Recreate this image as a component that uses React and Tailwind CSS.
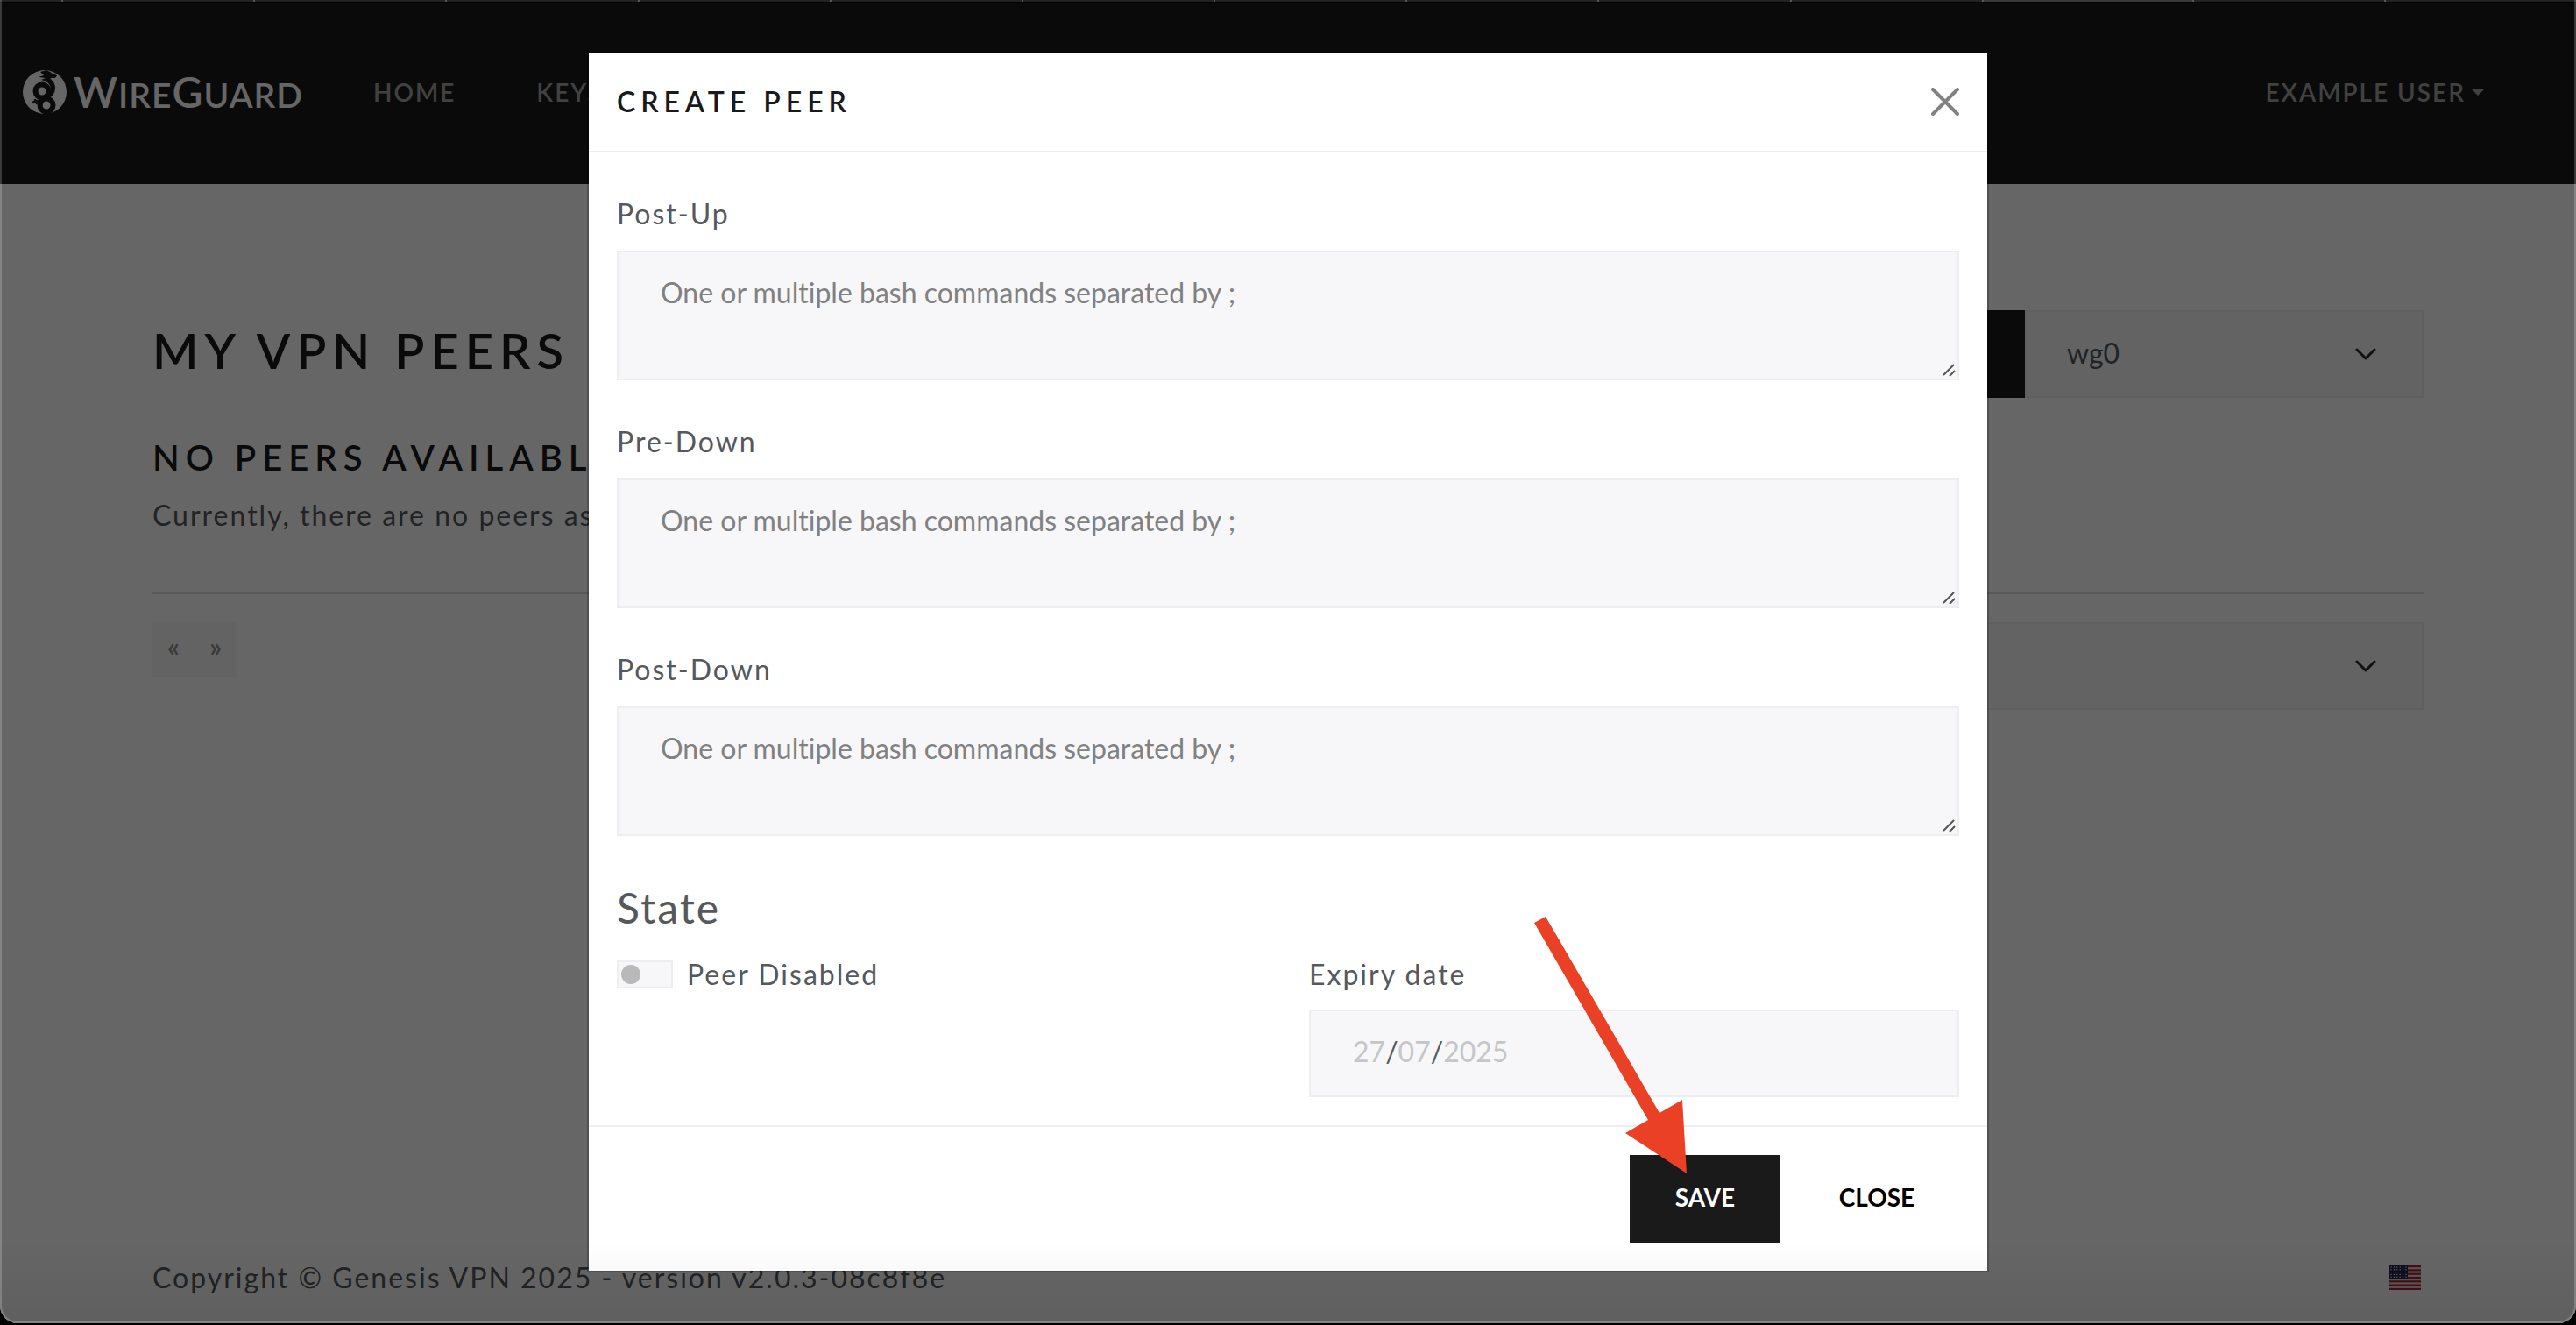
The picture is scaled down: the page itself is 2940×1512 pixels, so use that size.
import { useId } from "react";

function BrowserEdge() {
  return (
    <div className="shrink-0 border-b border-black" aria-hidden="true">
      <div className="flex h-[2px] bg-[#222222]">
        <div className="w-[70px]" />
        {Array.from({ length: 10 }, (_, i) => (
          <div key={i} className="flex-1 border-l-2 border-[#555555]" />
        ))}
        <div className="w-[240px] border-l-2 border-[#555555] bg-[#393939]" />
        <div className="flex-1 border-l-2 border-[#555555]" />
        <div className="flex-1 border-l-2 border-[#555555]" />
      </div>
    </div>
  );
}

function Logo() {
  return (
    <a href="#" aria-label="WireGuard" className="flex items-center gap-2 text-white">
      <svg viewBox="0 0 50 50" className="size-[50px]" aria-hidden="true">
        <circle cx="25" cy="25" r="25" fill="#fff" />
        <path d="M20 2 L27 0 L31 2 L34 4 L39 6 L37 9 L31 9 C33 11 37 15 37 21 L32 20 C31 15 26 12 21 11 L26 9 L18 8 L24 6 Z" fill="#1a1a1a" />
        <g fill="none" stroke="#1a1a1a" strokeLinecap="round">
          <path d="M33 15 C36 22 34 28 27 31 C23 33 20 36 20 40" strokeWidth="5" />
          <circle cx="22" cy="24" r="7.500" strokeWidth="6" />
          <circle cx="27" cy="40" r="7.500" strokeWidth="6" />
          <path d="M11 37 L15 35 L18 35 M14 34 L16 38" strokeWidth="2.500" />
        </g>
      </svg>
      <span className="flex items-baseline text-[39px] leading-none tracking-[1px]">
        <span className="text-[48px]">W</span>IRE<span className="text-[48px]">G</span>UARD
      </span>
    </a>
  );
}

function Chevron() {
  return (
    <svg viewBox="0 0 24 14" className="pointer-events-none absolute top-1/2 right-[54px] h-[14px] w-6 -translate-y-1/2" aria-hidden="true">
      <path d="M2 2 L12 12 L22 2" fill="none" stroke="#2b2b2b" strokeWidth="3" strokeLinecap="round" strokeLinejoin="round" />
    </svg>
  );
}

function Select({ label, className, children }) {
  return (
    <div className={className + " relative"}>
      <select
        aria-label={label}
        className="h-[100px] w-full appearance-none border-2 border-[#eceeef] bg-[#f7f7f9] px-[46px] pb-[2px] text-[32px] text-[#55595c]"
      >
        {children}
      </select>
      <Chevron />
    </div>
  );
}

function Flag() {
  return (
    <svg viewBox="0 0 36 28" className="mr-[3px] h-7 w-9" role="img" aria-label="English">
      <rect width="36" height="28" fill="#dddddd" />
      {[0, 1, 2, 3, 4, 5, 6].map((i) => (
        <rect key={i} y={(i * 56) / 13} width="36" height="2.150" fill="#b22234" />
      ))}
      <rect width="21" height="15" fill="#25264f" />
      {[0, 1, 2, 3, 4].flatMap((r) =>
        [0, 1, 2, 3, 4, 5].map((c) => (
          <circle key={r + "-" + c} cx={2 + c * 3.400} cy={2 + r * 2.800} r="0.700" fill="#fff" />
        ))
      )}
    </svg>
  );
}

function CommandField({ label }) {
  const id = useId();
  return (
    <div className="mt-[46px]">
      <label htmlFor={id} className="mb-[18px] block tracking-[2px]">
        {label}
      </label>
      <div className="relative">
        <textarea
          id={id}
          placeholder="One or multiple bash commands separated by ;"
          className="block h-[148px] w-full resize-none border-2 border-[#eceeef] bg-[#f7f7f9] px-12 py-[22px] placeholder:text-[#818181]"
        />
        <svg viewBox="0 0 16 16" className="pointer-events-none absolute right-1 bottom-1 size-4" aria-hidden="true">
          <path d="M2 14 L14 2 M9 15 L15 9" stroke="#555555" strokeWidth="2" />
        </svg>
      </div>
    </div>
  );
}

function Dialog() {
  return (
    <div
      role="dialog"
      aria-labelledby="dialog-title"
      className="relative mx-auto mt-[55px] w-full max-w-[1600px] border-2 border-black/20 bg-white bg-clip-padding leading-[48px]"
    >
      <div className="flex items-center justify-between border-b-2 border-[#eceeef] p-8">
        <h5 id="dialog-title" className="font-semibold tracking-[6px] text-[#1a1a1a]">CREATE PEER</h5>
        <button type="button" aria-label="Close dialog" className="size-8">
          <svg viewBox="0 0 32 32" className="size-8">
            <path d="M2 2 L30 30 M30 2 L2 30" stroke="#818181" strokeWidth="4" strokeLinecap="round" />
          </svg>
        </button>
      </div>

      <div className="px-8 pb-8">
        <CommandField label="Post-Up" />
        <CommandField label="Pre-Down" />
        <CommandField label="Post-Down" />
        <fieldset className="mt-[46px]">
          <legend className="mb-4 text-[48px] leading-[72px] tracking-[2px]">State</legend>
          <div className="grid grid-cols-2 gap-12">
            <label className="flex h-12 items-center gap-4 tracking-[2px]">
              <input
                type="checkbox"
                className="h-8 w-16 appearance-none border-2 border-[#eceeef] bg-[#f7f7f9] p-[3px] before:block before:size-[22px] before:rounded-full before:bg-[#b9b9b9]"
              />
              Peer Disabled
            </label>
            <div>
              <label htmlFor="expiry" className="mb-4 block tracking-[2px]">Expiry date</label>
              <div className="relative">
                <input id="expiry" type="text" className="block h-[100px] w-full border-2 border-[#eceeef] bg-[#f7f7f9] px-12" />
                <div className="pointer-events-none absolute inset-y-0 left-[50px] flex items-center pb-1 text-[#c6c6c6]">
                  27<span className="text-[#55595c]">/</span>07<span className="text-[#55595c]">/</span>2025
                </div>
              </div>
            </div>
          </div>
        </fieldset>
      </div>

      <div className="flex justify-end gap-4 border-t-2 border-[#eceeef] p-8 text-[28px] font-bold">
        <button type="button" className="h-[100px] w-[172px] bg-[#1a1a1a] pb-1 text-white">SAVE</button>
        <button type="button" className="h-[100px] w-[188px] pb-1 text-black">CLOSE</button>
      </div>

      <svg viewBox="0 0 176 295" className="pointer-events-none absolute right-[342px] bottom-[110px] h-[295px] w-[176px]" aria-hidden="true">
        <polygon points="1,8 14,1 144,225 170,210 175,294 105,248 131,233" fill="#ea4026" />
      </svg>
    </div>
  );
}

export default function App() {
  return (
    <div className="h-screen bg-black pb-[2px] font-['Lato',sans-serif] text-[32px] leading-[48px] text-[#55595c] [font-variant-ligatures:none]">
      <div className="relative flex h-full flex-col overflow-hidden rounded-b-[20px] bg-white">
        <BrowserEdge />
        <div className="relative flex min-h-0 flex-1 flex-col">
          <header className="flex h-[207px] shrink-0 items-center justify-between bg-[#1a1a1a] pr-[104px] pb-1 pl-[26px] text-[28px] font-semibold text-[#a3a3a3]">
            <div className="flex items-center gap-20">
              <Logo />
              <nav className="flex gap-[92px] tracking-[2px]">
                <a href="#home">HOME</a>
                <a href="#keys">KEYS</a>
              </nav>
            </div>
            <button type="button" className="flex items-center gap-1.5 tracking-[2px]">
              EXAMPLE USER
              <svg viewBox="0 0 16 8" className="h-2 w-4" aria-hidden="true">
                <path d="M0 0 H16 L8 8 Z" fill="currentColor" />
              </svg>
            </button>
          </header>

          <main className="mx-auto w-full max-w-[2640px] flex-1 px-6 pt-36">
            <div className="flex items-center justify-between">
              <h2 className="pb-2 text-[56px] font-semibold tracking-[7px] text-[#1a1a1a]">MY VPN PEERS</h2>
              <div className="flex">
                <button type="button" aria-label="Create peer" className="h-[100px] w-[172px] bg-[#1a1a1a]" />
                <Select label="Interface" className="w-[455px]">
                  <option>wg0</option>
                </Select>
              </div>
            </div>
            <h4 className="mt-11 text-[40px] font-semibold tracking-[7px] text-[#1a1a1a]">NO PEERS AVAILABLE</h4>
            <p className="mt-[18px] tracking-[2px]">Currently, there are no peers assigned.</p>
            <hr className="mt-16 mb-8 border-t-2 border-[#dcdcdc]" />
            <div className="flex items-start justify-between">
              <nav aria-label="Pagination" className="flex bg-[#f7f7f9] text-[32px] font-semibold text-[#919191]">
                <a href="#prev" aria-label="Previous" className="w-12 pt-1 pb-[10px] text-center">«</a>
                <a href="#next" aria-label="Next" className="w-12 pt-1 pb-[10px] text-center">»</a>
              </nav>
              <Select label="Page size" className="w-[627px]" />
            </div>
          </main>

          <footer className="mx-auto flex w-full max-w-[2640px] items-center justify-between px-6 pb-7 tracking-[2px]">
            <span>Copyright © Genesis VPN 2025 - version v2.0.3-08c8f8e</span>
            <Flag />
          </footer>

          <div className="absolute inset-0 bg-black/60">
            <Dialog />
          </div>
        </div>
        <div className="pointer-events-none absolute inset-0 rounded-b-[20px] border-2 border-t-0 border-white/20 bg-linear-to-t from-black/6 to-transparent to-6%" />
      </div>
    </div>
  );
}
